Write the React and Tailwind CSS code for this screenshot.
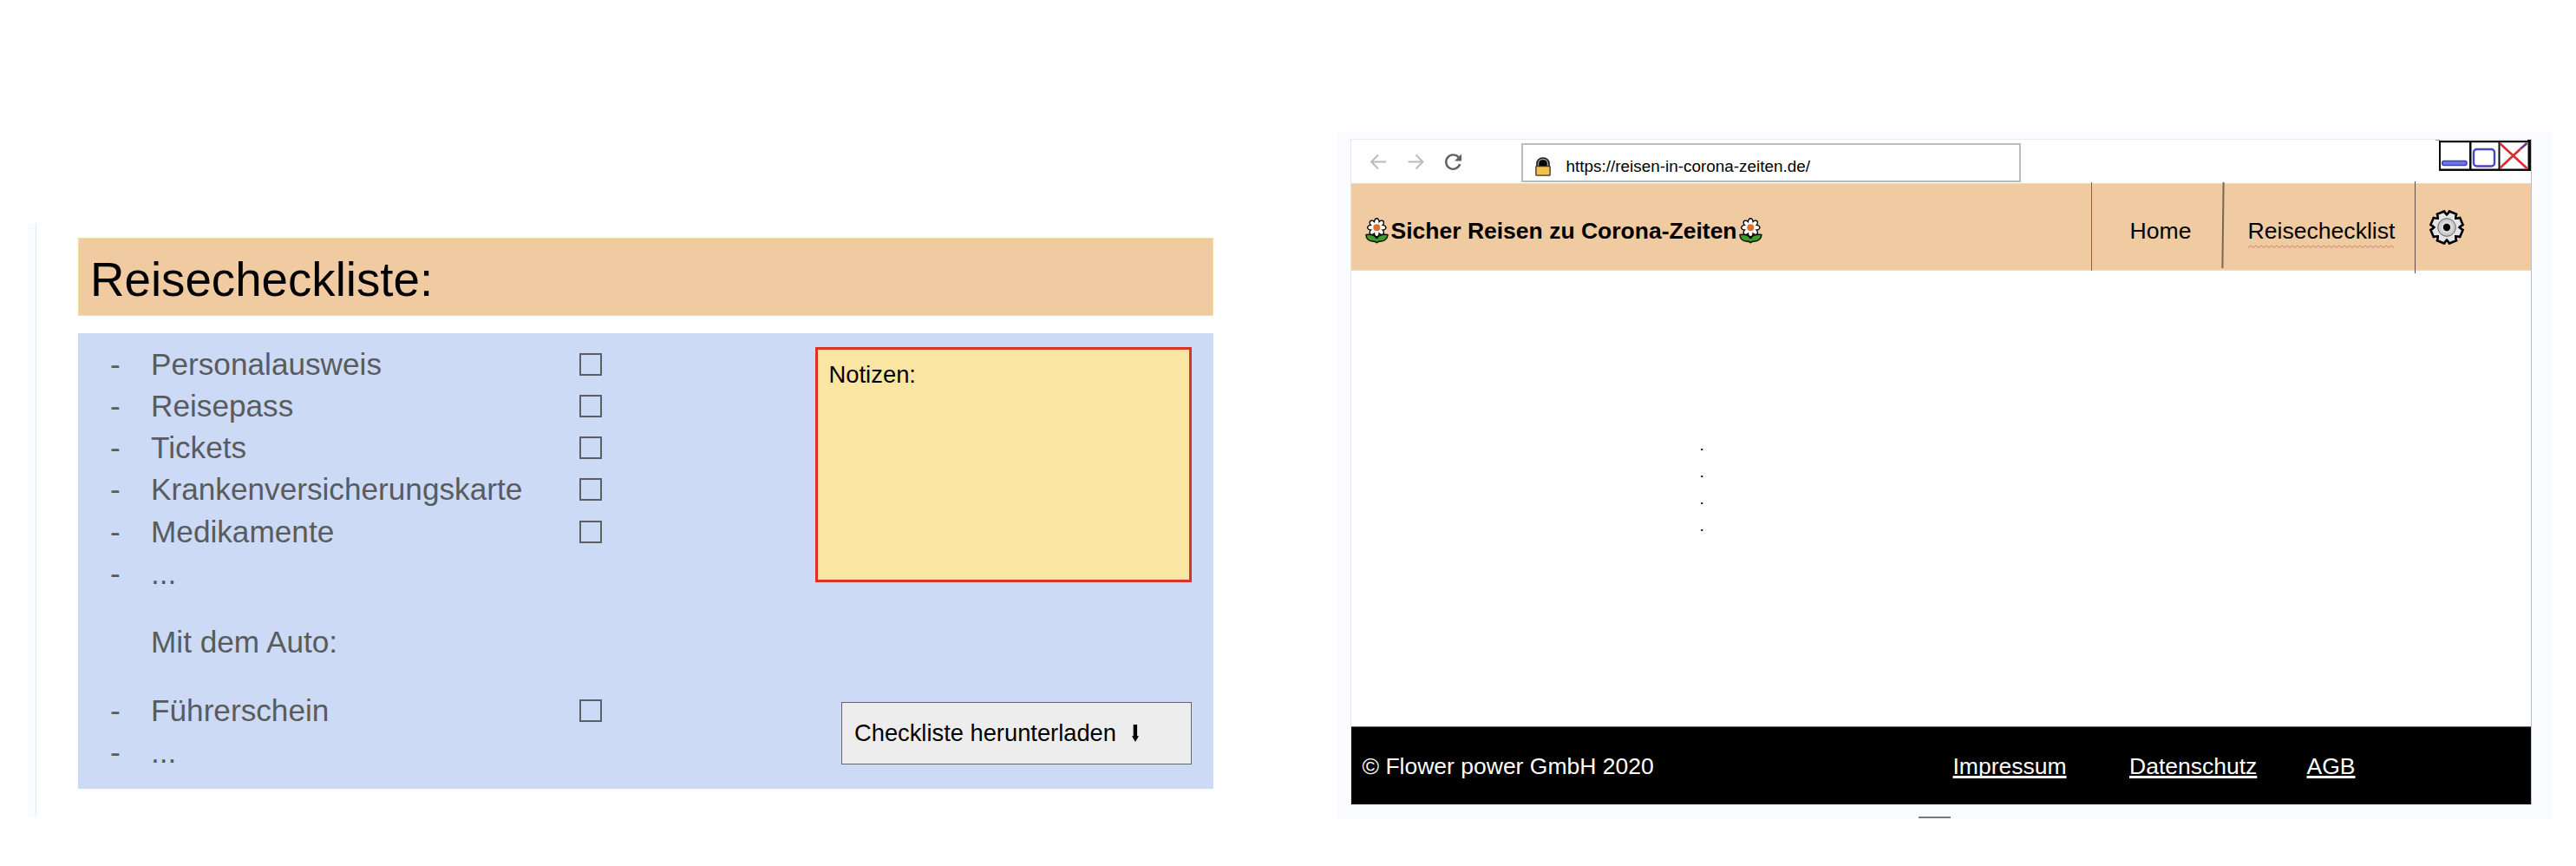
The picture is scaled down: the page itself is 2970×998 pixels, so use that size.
const documents = ["Personalausweis", "Reisepass", "Tickets", "Krankenversicherungskarte", "Medikamente"];

function Row({ label, checkbox = true, dash = true, className = "" }) {
  return (
    <div className={`flex h-[48.25px] items-center leading-[48.25px] ${className}`}>
      <span className="w-[47px] shrink-0">{dash ? "-" : ""}</span>
      <span className="w-[494px] shrink-0 whitespace-nowrap">{label}</span>
      {checkbox && <span className="h-[26px] w-[26px] shrink-0 border-2 border-[#5c5f63]" />}
    </div>
  );
}

function ChecklistPanel() {
  return (
    <section className="mt-[258px] ml-[32px] flex h-[683px] w-[1368px] shrink-0">
      <div className="w-[10px] shrink-0 border-r border-[#e3e9f2] bg-[#f9fbff]" />
      <div className="ml-[48px] flex w-[1309px] flex-col pt-[16px]">
        <h1 className="h-[89.5px] border border-[#f6dda6] bg-[#f0caa1] pl-[13px] text-[54.7px] leading-[94px] font-normal text-black">
          Reisecheckliste:
        </h1>
        <div className="mt-[20px] flex h-[525.5px] justify-between bg-[#ccdaf5]">
          <div className="pt-[12px] pl-[37px] text-[35.2px] text-[#595b5e]">
            {documents.map((d) => (
              <Row key={d} label={d} />
            ))}
            <Row label="..." checkbox={false} />
            <Row label="Mit dem Auto:" dash={false} checkbox={false} className="mt-[31px]" />
            <Row label="Führerschein" className="mt-[30.5px]" />
            <Row label="..." checkbox={false} />
          </div>
          <div className="flex flex-col items-end pt-[16px] pr-[25px]">
            <div className="h-[271.5px] w-[434px] border-[3px] border-[#d93426] bg-[#fae5a2] pt-[11.5px] pl-[12.5px] text-[27.4px] leading-[36px] text-black">
              Notizen:
            </div>
            <button className="mt-[137.5px] flex h-[72px] w-[404px] items-center border-[1.5px] border-[#63666b] bg-[#ededed] pt-[1px] pl-[14px] text-[27.3px] text-black">
              Checkliste herunterladen
              <svg className="ml-[18px] h-[20px] w-[8px]" viewBox="0 0 8 20">
                <path d="M1.7 0h4.4v13.3H8L4 20 0 13.3h1.7z" fill="#000" />
              </svg>
            </button>
          </div>
        </div>
      </div>
    </section>
  );
}

const octants = [0, 45, 90, 135, 180, 225, 270, 315];

function Flower() {
  return (
    <svg className="h-[30px] w-[27px] shrink-0" viewBox="0 0 27 30">
      <path
        d="M13.3 23.5C11 19.5 5.5 18.8 1 19.4c0 4.4 3 7.4 7.2 7.7 2 .1 3.6 0 5.1 1.7 1.5-1.7 3.1-1.6 5.1-1.7 4.2-.3 7.3-3.3 7.6-7.7-4.5-.6-10.4.1-12.7 4.1z"
        fill="#3f9a2c"
        stroke="#0c1208"
        strokeWidth="1.5"
        strokeLinejoin="round"
      />
      <path d="M13.3 18v6" stroke="#111" strokeWidth="3" />
      <g fill="#000">
        {octants.map((a) => (
          <ellipse key={a} cx="13.3" cy="4.9" rx="3.5" ry="4.9" transform={`rotate(${a} 13.3 11.3)`} />
        ))}
      </g>
      <g fill="#fff">
        {octants.map((a) => (
          <ellipse key={a} cx="13.3" cy="5.5" rx="2.2" ry="4" transform={`rotate(${a} 13.3 11.3)`} />
        ))}
      </g>
      <circle cx="13.3" cy="11.3" r="4" fill="#e0702f" />
    </svg>
  );
}

function Padlock() {
  return (
    <svg className="h-[22px] w-[18px]" viewBox="0 0 18 22">
      <path d="M2 11V7.5C2 3.5 5 1 9 1s7 2.5 7 6.5V11z" fill="#222" stroke="#111" strokeWidth="1.6" />
      <path d="M3.5 11V7.5C3.5 4.3 6 2.5 9 2.5s5.500 1.800 5.500 5V11" fill="#050505" stroke="#9b9b9b" strokeWidth="1.5" />
      <rect x="0.9" y="10.6" width="16.2" height="10.5" rx="0.7" fill="#f2c14e" stroke="#3a3222" strokeWidth="1.3" />
    </svg>
  );
}

function Gear() {
  // Eight wide teeth; the notches point up, down, left, right and along the diagonals.
  const tooth = [
    [14.6, 0],
    [16.6, 6],
    [18.8, 9],
    [18.8, 36],
    [16.6, 39],
  ];
  const points = octants
    .flatMap((a) =>
      tooth.map(([r, d]) => {
        const t = ((a + d) * Math.PI) / 180;
        return `${(20 + r * Math.cos(t)).toFixed(2)},${(20 + r * Math.sin(t)).toFixed(2)}`;
      }),
    )
    .join(" ");
  return (
    <svg className="h-[40px] w-[40px]" viewBox="0 0 40 40">
      <polygon points={points} fill="#e4e5e7" stroke="#000" strokeWidth="2.6" strokeLinejoin="miter" />
      <circle cx="20" cy="20" r="10.3" fill="#cbcbcb" stroke="#555" strokeWidth="0.9" />
      <circle cx="20" cy="20" r="7" fill="#dcdcdc" />
      <circle cx="20" cy="20" r="4.2" fill="#000" />
    </svg>
  );
}

function WindowButtons() {
  return (
    <svg className="h-[36px] w-[110px]" viewBox="0 0 110 36">
      <path d="M0 .5h5" stroke="#999" />
      <path d="M4 1h102V0h4v36H4z" fill="#0b0b0b" />
      <path d="M6 3.300h33v30.200H6zM41.500 3.300h31v30.200h-31zM74.500 3.300h32v30.200h-32z" fill="#fff" />
      <rect x="7.7" y="24.5" width="28.3" height="5" rx="2" fill="#7077e8" stroke="#3c41b5" strokeWidth="1.5" />
      <rect x="44" y="11" width="24" height="19.5" rx="3.5" fill="none" stroke="#4348c0" strokeWidth="2.4" />
      <path d="M74.500 4.500l31 28.500M74.500 32.500L98 10.500" stroke="#d92b30" strokeWidth="2.6" />
      <path d="M98 10.500l7.500-6.500" stroke="#71328f" strokeWidth="2.6" />
    </svg>
  );
}

function Squiggle() {
  const d = Array.from({ length: 58 }, (_, i) => `${i ? "L" : "M"}${i * 3} ${i % 2 ? 1 : 3.5}`).join("");
  return (
    <svg className="absolute top-[calc(50%+20.5px)] left-0 h-[5px] w-[168px]" viewBox="0 0 168 5">
      <path d={d} fill="none" stroke="#cc7a6c" strokeWidth="0.9" />
    </svg>
  );
}

function Toolbar() {
  return (
    <div className="flex h-[50px] items-start justify-between">
      <div className="flex">
        <div className="flex w-[195.5px] pt-[16px] pl-[21px]">
          <svg className="h-[20px] w-[110px]" viewBox="0 0 110 20" fill="none" strokeWidth="1.8">
            <path d="M19 9.500H2M10 1.500L2 9.500l8 8" stroke="#b9b9b9" />
            <path d="M44.500 9.500h17M53.500 1.500l8 8-8 8" stroke="#b9b9b9" />
            <path d="M104.200 12.200A8.200 8.200 0 1 1 102.600 4.200" stroke="#5d6064" strokeWidth="2.4" />
            <path d="M106 .5v8h-8z" fill="#5d6064" />
          </svg>
        </div>
        <div className="mt-[4px] flex h-[45px] w-[576px] border-2 border-[#b9bcbf] bg-white pt-[13.5px] pl-[14.5px]">
          <Padlock />
          <span className="ml-[17.5px] text-[18.9px] leading-[22px] whitespace-nowrap text-black">https://reisen-in-corona-zeiten.de/</span>
        </div>
      </div>
      <WindowButtons />
    </div>
  );
}

function Header() {
  return (
    <header className="flex h-[101px] items-center justify-between border-y border-[#f4dcb8] bg-[#f0caa1] text-[26.6px] leading-[30px] text-black">
      <div className="flex items-center pt-[8px] pl-[15.5px] font-bold">
        <Flower />
        <span className="ml-[3px] w-[401px] text-[26.5px] whitespace-nowrap">Sicher Reisen zu Corona-Zeiten</span>
        <Flower />
      </div>
      <nav className="flex h-[99px] w-[507.5px] shrink-0 items-center">
        <span className="-mt-[1px] h-[102px] w-[1.5px] shrink-0 bg-[#75685b]" />
        <a className="w-[149.5px] shrink-0 pt-[8px] pl-[43.5px]">Home</a>
        <span className="-mt-[4px] h-[99px] w-[1.5px] shrink-0 rotate-[0.7deg] bg-[#75685b]" />
        <a className="relative ml-[28.5px] w-[192px] shrink-0 pt-[8px]">
          Reisechecklist
          <Squiggle />
        </a>
        <span className="mt-[1px] h-[106px] w-[1.5px] shrink-0 bg-[#5c5249]" />
        <span className="ml-[16px]">
          <Gear />
        </span>
      </nav>
    </header>
  );
}

function Footer() {
  return (
    <footer className="flex h-[90px] items-center border-t border-[#666] bg-black text-[26.5px] leading-[30px] whitespace-nowrap text-white">
      <span className="w-[693.5px] shrink-0 pl-[12.5px]">© Flower power GmbH 2020</span>
      <a className="w-[203.5px] shrink-0 underline decoration-[2.5px] underline-offset-[2px] [text-decoration-skip-ink:none]">Impressum</a>
      <a className="w-[204.5px] shrink-0 underline decoration-[2.5px] underline-offset-[2px] [text-decoration-skip-ink:none]">Datenschutz</a>
      <a className="underline decoration-[2.5px] underline-offset-[2px] [text-decoration-skip-ink:none]">AGB</a>
    </footer>
  );
}

function BrowserPanel() {
  return (
    <section className="mt-[152px] ml-[142px] flex h-[791px] w-[1400px] shrink-0 flex-col bg-[#f9fbfe] pt-[8px] pl-[15px]">
      <div className="flex h-[767px] w-[1362px] shrink-0 flex-col border-t border-r border-l border-t-[#e6ebef] border-r-[#bcc0c4] border-l-[#e2e6ea] bg-[#fefefe]">
        <Toolbar />
        <Header />
        <main className="flex grow flex-col pt-[184.5px] pl-[401.5px] text-[19px] leading-[31px] text-black">
          <span>.</span>
          <span>.</span>
          <span>.</span>
          <span>.</span>
        </main>
        <Footer />
      </div>
      <div className="mt-auto ml-[655px] h-[2px] w-[37px] shrink-0 bg-[#77797b]" />
    </section>
  );
}

export default function App() {
  return (
    <div className="flex h-[998px] w-[2970px] items-start overflow-hidden bg-[#fefefe] font-['Liberation_Sans',Arial,sans-serif]">
      <ChecklistPanel />
      <BrowserPanel />
    </div>
  );
}
